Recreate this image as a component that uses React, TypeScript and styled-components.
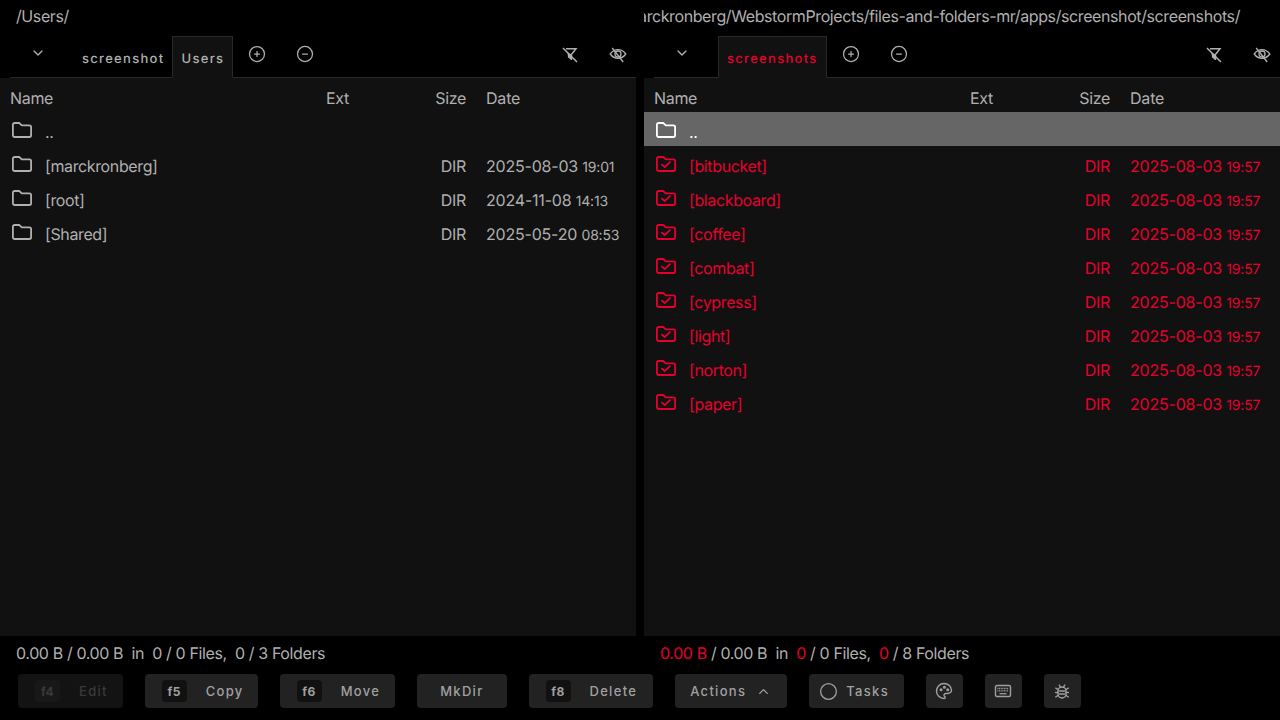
import styled, { createGlobalStyle } from "styled-components";
import { TbChevronDown, TbChevronUp, TbCircle, TbCircleMinus, TbCirclePlus, TbPalette } from "react-icons/tb";

const RED = "#e6002e";
const TEXT = "#b0b0b0";

interface Entry {
  name: string;
  day: string;
  time: string;
}

const leftRows: Entry[] = [
  { name: "[marckronberg]", day: "2025-08-03", time: "19:01" },
  { name: "[root]", day: "2024-11-08", time: "14:13" },
  { name: "[Shared]", day: "2025-05-20", time: "08:53" },
];

const rightRows: Entry[] = ["bitbucket", "blackboard", "coffee", "combat", "cypress", "light", "norton", "paper"].map(
  (n) => ({ name: `[${n}]`, day: "2025-08-03", time: "19:57" }),
);

const App = () => {
  return (
    <>
      <GlobalStyle />
      <Page>
        <Panels>
          <Panel>
            <PathBar>/Users/</PathBar>
            <TabBar>
              <MenuToggle>
                <TbChevronDown size={16} />
              </MenuToggle>
              <Tab>screenshot</Tab>
              <Tab $active>Users</Tab>
              <TabTools />
              <RightTools />
            </TabBar>
            <FileList>
              <ListHead />
              <ParentRow />
              {leftRows.map((row) => (
                <FileRow key={row.name} entry={row} />
              ))}
            </FileList>
          </Panel>
          <Panel>
            <PathBar $end>/Users/marckronberg/WebstormProjects/files-and-folders-mr/apps/screenshot/screenshots/</PathBar>
            <TabBar>
              <MenuToggle>
                <TbChevronDown size={16} />
              </MenuToggle>
              <Tab $active $selected>
                screenshots
              </Tab>
              <TabTools />
              <RightTools />
            </TabBar>
            <FileList>
              <ListHead />
              <ParentRow focused />
              {rightRows.map((row) => (
                <FileRow key={row.name} entry={row} selected />
              ))}
            </FileList>
          </Panel>
        </Panels>
        <StatusRow>
          <Status>
            0.00 B / 0.00 B&nbsp; in&nbsp; 0 / 0 Files,&nbsp; 0 / 3 Folders
          </Status>
          <Status>
            <Hot>0.00 B</Hot> / 0.00 B&nbsp; in&nbsp; <Hot>0</Hot> / 0 Files,&nbsp; <Hot>0</Hot> / 8 Folders
          </Status>
        </StatusRow>
        <ButtonRow>
          <ActionButton disabled>
            <Key>f4</Key>
            Edit
          </ActionButton>
          <ActionButton $padRight={14}>
            <Key>f5</Key>
            Copy
          </ActionButton>
          <ActionButton>
            <Key>f6</Key>
            Move
          </ActionButton>
          <ActionButton $padLeft={23} $padRight={23}>
            MkDir
          </ActionButton>
          <ActionButton $padRight={16}>
            <Key>f8</Key>
            Delete
          </ActionButton>
          <ActionButton $gap={10} $padLeft={15} $padRight={16}>
            Actions
            <TbChevronUp size={15} strokeWidth={2.2} />
          </ActionButton>
          <ActionButton $gap={7} $padLeft={9} $padRight={15}>
            <TbCircle size={21} strokeWidth={1.5} />
            Tasks
          </ActionButton>
          <IconButton>
            <TbPalette size={20} strokeWidth={1.7} />
          </IconButton>
          <IconButton>
            <KeyboardIcon />
          </IconButton>
          <IconButton>
            <BugIcon />
          </IconButton>
        </ButtonRow>
      </Page>
    </>
  );
};

export default App;

const FolderIcon = ({ checked }: { checked?: boolean }) => (
  <svg width="20" height="16" viewBox="0 0 20 16" fill="none" stroke="currentColor" strokeWidth="1.8" strokeLinejoin="round">
    <path d="M2.6 1h4.6l2.6 2.4h7.6a1.7 1.7 0 0 1 1.7 1.7v8.2a1.7 1.7 0 0 1-1.7 1.7H2.6a1.7 1.7 0 0 1-1.7-1.7V2.7A1.7 1.7 0 0 1 2.6 1z" />
    {checked && <path d="M6 8.6l2.7 2.6 5.2-5" strokeLinecap="round" />}
  </svg>
);

const FilterOffIcon = () => (
  <svg width="18" height="18" viewBox="0 0 18 18" fill="none" stroke="currentColor" strokeWidth="1.5">
    <path d="M5 3.7H15L10.4 9.6V15" />
    <path d="M2 3l14 14" />
    <path d="M6.5 7.5l3.9 2.1V15L7 12.5z" fill="currentColor" stroke="none" />
  </svg>
);

const EyeOffIcon = () => (
  <svg width="18" height="18" viewBox="0 0 18 18" fill="none" stroke="currentColor" strokeWidth="1.3">
    <path d="M1.2 9C5.5 3.2 12.5 3.2 16.8 9C12.5 14.8 5.5 14.8 1.2 9z" />
    <circle cx="9" cy="9" r="3" />
    <path d="M3.2 3l11 14" />
  </svg>
);

const KeyboardIcon = () => (
  <svg width="18" height="14" viewBox="0 0 18 14" fill="none" stroke="currentColor">
    <rect x="1.5" y="1.5" width="15" height="11" rx="1.5" strokeWidth="1.4" />
    <path d="M3.5 4.5h11M3.5 6.8h11" strokeWidth="1.3" strokeDasharray="1 0.6" />
    <path d="M5.5 9.7h7" strokeWidth="1.3" />
  </svg>
);

const BugIcon = () => (
  <svg width="18" height="18" viewBox="0 0 18 18" fill="none" stroke="currentColor" strokeWidth="1.4" strokeLinecap="round">
    <path d="M6.2 3l1.2 2M11.8 3l-1.2 2" />
    <rect x="5" y="5" width="8" height="11" rx="4" />
    <path d="M6.5 9h5M6.5 12h5" />
    <path d="M5 7.5L2.8 6.2M13 7.5l2.2-1.3M5 10.5H2.6M13 10.5h2.4M5 13.5l-2.2 1.3M13 13.5l2.2 1.3" />
  </svg>
);

const TabTools = () => (
  <>
    <ToolIcon>
      <TbCirclePlus size={20} strokeWidth={1.5} />
    </ToolIcon>
    <ToolIcon>
      <TbCircleMinus size={20} strokeWidth={1.5} />
    </ToolIcon>
  </>
);

const RightTools = () => (
  <ToolsEnd>
    <ToolIcon>
      <FilterOffIcon />
    </ToolIcon>
    <ToolIcon>
      <EyeOffIcon />
    </ToolIcon>
  </ToolsEnd>
);

const ListHead = () => (
  <Row>
    <span>Name</span>
    <span>Ext</span>
    <SizeCell>Size</SizeCell>
    <DateCell>Date</DateCell>
  </Row>
);

const ParentRow = ({ focused }: { focused?: boolean }) => (
  <Row $focused={focused}>
    <NameCell>
      <FolderIcon />
      <span>..</span>
    </NameCell>
  </Row>
);

const FileRow = ({ entry, selected }: { entry: Entry; selected?: boolean }) => (
  <Row $selected={selected}>
    <NameCell>
      <FolderIcon checked={selected} />
      <span>{entry.name}</span>
    </NameCell>
    <span />
    <SizeCell>DIR</SizeCell>
    <DateCell>
      {entry.day} <Time>{entry.time}</Time>
    </DateCell>
  </Row>
);

const GlobalStyle = createGlobalStyle`
  html, body {
    margin: 0;
    height: 100%;
    background: #000;
  }
  body {
    font-family: Inter, "Liberation Sans", sans-serif;
    color: ${TEXT};
    text-rendering: geometricPrecision;
  }
`;

const Page = styled.div`
  width: 1280px;
  height: 720px;
  display: flex;
  flex-direction: column;
  overflow: hidden;
`;

const Panels = styled.div`
  height: 636px;
  display: grid;
  grid-template-columns: 636px 636px;
  column-gap: 8px;
`;

const Panel = styled.section`
  display: flex;
  flex-direction: column;
  min-width: 0;
  overflow: hidden;
`;

const PathBar = styled.div<{ $end?: boolean }>`
  height: 32px;
  flex: none;
  display: flex;
  align-items: center;
  justify-content: ${(p) => (p.$end ? "flex-end" : "flex-start")};
  padding: 0 ${(p) => (p.$end ? "40px" : "16px")} 0 ${(p) => (p.$end ? "0" : "16px")};
  font-size: 16px;
  letter-spacing: -0.4px;
  white-space: nowrap;
  overflow: hidden;
`;

const TabBar = styled.div`
  height: 46px;
  flex: none;
  display: flex;
  align-items: flex-end;
  margin-left: 10px;
  border-bottom: 1px solid #27282c;
  box-sizing: border-box;
`;

const MenuToggle = styled.div`
  width: 56px;
  height: 42px;
  display: flex;
  align-items: center;
  justify-content: center;
  align-self: flex-start;
  flex: none;
  margin-right: 8px;
`;

const Tab = styled.div<{ $active?: boolean; $selected?: boolean }>`
  height: 42px;
  margin-bottom: -1px;
  padding: 4px 8px 0;
  display: flex;
  align-items: center;
  box-sizing: border-box;
  font-size: 13px;
  font-weight: 500;
  letter-spacing: 1.3px;
  color: ${(p) => (p.$selected ? RED : TEXT)};
  background: ${(p) => (p.$active ? "#111" : "transparent")};
  border: ${(p) => (p.$active ? "1px solid #27282c" : "0")};
  border-bottom-color: #111;
`;

const ToolIcon = styled.div`
  width: 48px;
  height: 44px;
  display: flex;
  align-items: center;
  justify-content: center;
  align-self: flex-start;
  flex: none;
`;

const ToolsEnd = styled.div`
  margin-left: auto;
  align-self: flex-start;
  display: flex;
  margin-right: -6px;
`;

const FileList = styled.div`
  flex: 1;
  background: #111;
`;

const Row = styled.div<{ $focused?: boolean; $selected?: boolean }>`
  height: 34px;
  display: grid;
  grid-template-columns: 316px 100px 40px 1fr;
  align-items: center;
  padding: 6px 10px 0;
  box-sizing: border-box;
  font-size: 16px;
  letter-spacing: -0.32px;
  color: ${(p) => (p.$focused ? "#fff" : p.$selected ? RED : TEXT)};
  background: ${(p) => (p.$focused ? "#666" : "transparent")};
`;

const NameCell = styled.div`
  display: flex;
  align-items: center;
  gap: 13px;
  letter-spacing: -0.38px;
  svg {
    flex: none;
    margin: 0 0 4px 2px;
  }
`;

const SizeCell = styled.span`
  text-align: right;
`;

const DateCell = styled.span`
  padding-left: 20px;
  white-space: nowrap;
  letter-spacing: -0.2px;
`;

const Time = styled.span`
  font-size: 14px;
`;

const StatusRow = styled.div`
  height: 38px;
  display: grid;
  grid-template-columns: 644px 636px;
  align-items: center;
`;

const Status = styled.div`
  padding-left: 16px;
  padding-bottom: 4px;
  font-size: 16px;
  letter-spacing: -0.38px;
  white-space: pre;
`;

const Hot = styled.span`
  color: ${RED};
`;

const ButtonRow = styled.div`
  display: flex;
  gap: 22px;
  padding-left: 18px;
`;

const ActionButton = styled.button<{ $gap?: number; $padLeft?: number; $padRight?: number }>`
  height: 34px;
  display: flex;
  align-items: center;
  gap: ${(p) => p.$gap ?? 19}px;
  padding: 0 ${(p) => p.$padRight ?? 15}px 0 ${(p) => p.$padLeft ?? 17}px;
  border: 0;
  border-radius: 4px;
  background: #222;
  color: #a0a0a0;
  font-family: inherit;
  font-size: 13px;
  font-weight: 500;
  letter-spacing: 1.3px;
  &:disabled {
    background: #131313;
    color: #3a3a3a;
  }
`;

const Key = styled.span`
  width: 25px;
  height: 22px;
  display: flex;
  align-items: center;
  justify-content: center;
  border-radius: 4px;
  background: #111;
  font-size: 12px;
  font-weight: 700;
  letter-spacing: 0.5px;
  button:disabled & {
    background: #181818;
  }
`;

const IconButton = styled.button`
  width: 37px;
  height: 34px;
  display: flex;
  align-items: center;
  justify-content: center;
  padding: 0;
  border: 0;
  border-radius: 4px;
  background: #222;
  color: #a0a0a0;
`;
